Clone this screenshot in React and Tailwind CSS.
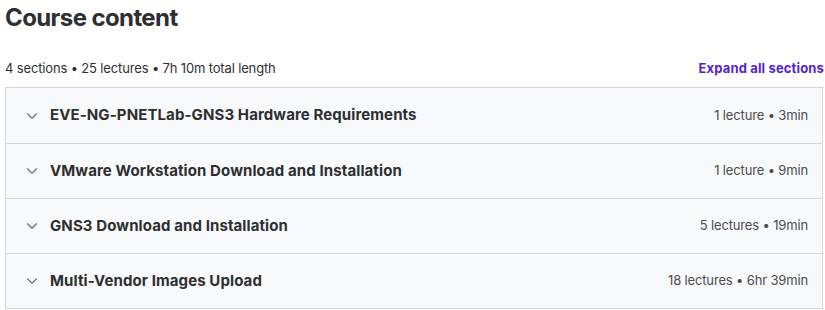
import { ChevronDown } from "lucide-react";

const sections = [
  { title: "EVE-NG-PNETLab-GNS3 Hardware Requirements", meta: "1 lecture • 3min" },
  { title: "VMware Workstation Download and Installation", meta: "1 lecture • 9min" },
  { title: "GNS3 Download and Installation", meta: "5 lectures • 19min" },
  { title: "Multi-Vendor Images Upload", meta: "18 lectures • 6hr 39min" },
];

export default function App() {
  return (
    <div className="w-[825px] h-[310px] bg-white pl-[5px] pr-[2px] font-['Inter',sans-serif] text-[#2d2f31]">
      <h2 className="text-[24px] font-bold leading-[36px] tracking-[-0.6px]">Course content</h2>
      <div className="flex items-end justify-between mt-[22px] mb-[9px]">
        <span className="text-[13px] text-[#2d2f31] leading-[20px] tracking-[-0.15px]">
          4 sections • 25 lectures • 7h 10m total length
        </span>
        <button className="text-[13px] font-bold text-[#5624d0] leading-[20px] tracking-[0.15px] -mr-px">
          Expand all sections
        </button>
      </div>
      <div className="border border-[#d1d7dc]">
        {sections.map((s, i) => (
          <div
            key={s.title}
            className={`flex items-center h-[55px] bg-[#f7f9fa] pl-[17px] pr-[14px] ${i > 0 ? "border-t border-[#d1d7dc]" : ""}`}
          >
            <ChevronDown size={18} strokeWidth={1.5} className="text-[#6a6f73] mr-[9px]" />
            <span className="flex-1 text-[15px] font-bold tracking-[0.1px]">{s.title}</span>
            <span className="text-[13px] text-[#4a4d50] tracking-[-0.15px]">{s.meta}</span>
          </div>
        ))}
      </div>
    </div>
  );
}
